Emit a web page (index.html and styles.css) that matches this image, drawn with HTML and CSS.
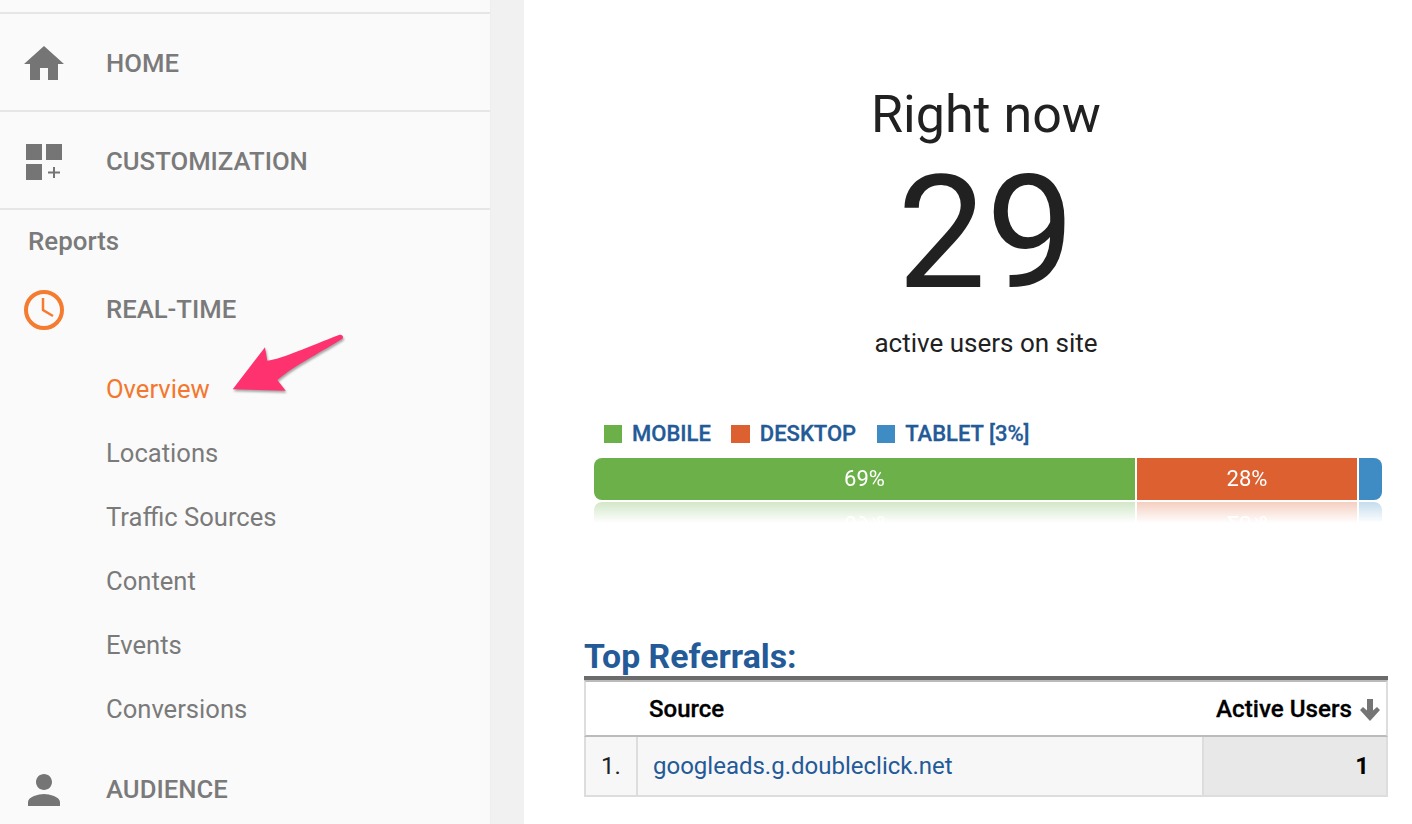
FILE: index.html
```html
<!DOCTYPE html>
<html lang="en">
<head>
  <meta charset="UTF-8">
  <title>Real-Time Overview</title>
  <link rel="stylesheet" href="styles.css">
</head>
<body>
  <!-- Sidebar -->
  <div class="sidebar">
    <div class="nav-row nav-row-ruled">
      <svg class="nav-icon" viewBox="0 0 24 24"><path d="M10 20v-6h4v6h5v-8h3L12 3 2 12h3v8z"/></svg>
      <span class="nav-label">HOME</span>
    </div>
    <div class="nav-row nav-row-ruled">
      <svg class="nav-icon" viewBox="0 0 48 48"><path d="M6 6h16v16H6zM26 6h16v16H26zM6 26h16v16H6z"/><path d="M34 29v11M28 34.500h12" class="plus"/></svg>
      <span class="nav-label">CUSTOMIZATION</span>
    </div>
    <div class="section-title">Reports</div>
    <div class="nav-row nav-row-open">
      <svg class="nav-icon clock" viewBox="0 0 48 48"><circle cx="24" cy="24" r="18"/><path class="clock-hands" d="M23 12v12l10 6"/></svg>
      <span class="nav-label">REAL-TIME</span>
    </div>
    <ul class="sub-list">
      <li class="active">Overview</li>
      <li>Locations</li>
      <li>Traffic Sources</li>
      <li>Content</li>
      <li>Events</li>
      <li>Conversions</li>
    </ul>
    <div class="nav-row nav-row-last">
      <svg class="nav-icon" viewBox="0 0 24 24"><path d="M12 12c2.210 0 4-1.790 4-4s-1.790-4-4-4-4 1.790-4 4 1.790 4 4 4zm0 2c-2.670 0-8 1.340-8 4v2h16v-2c0-2.660-5.330-4-8-4z"/></svg>
      <span class="nav-label">AUDIENCE</span>
    </div>
  </div>

  <div class="gutter"></div>

  <!-- Main report -->
  <div class="main">
    <div class="now-title">Right now</div>
    <div class="now-count">29</div>
    <div class="now-caption">active users on site</div>

    <div class="device-block">
      <div class="legend">
        <span class="legend-item"><i class="swatch mobile"></i>MOBILE</span>
        <span class="legend-item"><i class="swatch swatch-wide desktop"></i>DESKTOP</span>
        <span class="legend-item legend-last"><i class="swatch tablet"></i>TABLET [3%]</span>
      </div>
      <div class="bar">
        <div class="bar-part mobile part-mobile">69%</div>
        <div class="bar-part desktop part-desktop">28%</div>
        <div class="bar-part tablet part-tablet"></div>
      </div>
    </div>

    <h2 class="table-title">Top Referrals:</h2>
    <table class="ref-table">
      <thead>
        <tr>
          <th class="col-rank"></th>
          <th class="col-source">Source</th>
          <th class="col-users">Active Users <svg class="sort-arrow" viewBox="0 0 20 22"><path d="M7 0h6v11.500l4-3.500 3 3-10 11L0 11l3-3 4 3.500z"/></svg></th>
        </tr>
      </thead>
      <tbody>
        <tr>
          <td class="col-rank">1.</td>
          <td class="col-source"><a href="#">googleads.g.doubleclick.net</a></td>
          <td class="col-users">1</td>
        </tr>
      </tbody>
    </table>
  </div>

  <!-- Annotation arrow -->
  <svg class="arrow" viewBox="0 0 130 70"><path d="M12.700 59.300 45 17.300 47.300 30.700C62 29 90 16 119 5 122 4 124.500 7 122 9 105 20 75 35 57.300 50L65.700 60.700z"/></svg>
</body>
</html>
```

FILE: styles.css
```css
html, body {
  margin: 0;
  height: 824px;
  overflow: hidden;
}
body {
  display: flex;
  position: relative;
  font-family: 'Roboto', 'Arial', sans-serif;
  background: #ffffff;
  color: #212121;
}
.sidebar {
  width: 490px;
  padding-top: 12px;
  box-sizing: border-box;
  background: #fafafa;
  flex-shrink: 0;
}
.gutter {
  width: 33px;
  flex-shrink: 0;
  background: #f1f1f1;
  border-left: 1px solid #eeeeee;
}
.nav-row {
  display: flex;
  align-items: center;
  padding-left: 20px;
  height: 96px;
  color: #757575;
}
.nav-row-ruled {
  height: 94px;
  padding-top: 2px;
  border-top: 2px solid #e6e6e6;
}
.nav-row-ruled + .section-title {
  border-top: 2px solid #e6e6e6;
}
.nav-row-open {
  height: 64px;
  margin-top: 3px;
}
.nav-row-last {
  height: 64px;
  margin-top: 16px;
}
.nav-icon {
  width: 48px;
  height: 48px;
  margin-top: 2px;
  margin-right: 38px;
  fill: #757575;
  flex-shrink: 0;
}
.plus {
  fill: none;
  stroke: #757575;
  stroke-width: 2;
}
.clock {
  fill: none;
  stroke: #f47b2f;
  stroke-width: 4;
}
.clock-hands {
  stroke-width: 2.500;
}
.nav-label {
  font-size: 25.7px;
  font-weight: 500;
  color: #7a7a7a;
}
.section-title {
  padding: 16px 0 0 28px;
  height: 48px;
  font-size: 25.9px;
  font-weight: 500;
  color: #7a7a7a;
}
.sub-list {
  list-style-type: none;
  margin: 16px 0 0 0;
  padding: 0 0 0 106px;
  font-size: 25.6px;
  color: #7a7a7a;
}
.sub-list li {
  height: 64px;
  line-height: 64px;
}
.sub-list .active {
  color: #f4772e;
}
.main {
  flex: 1;
  display: flex;
  flex-direction: column;
  padding: 0 24px 0 60px;
  min-width: 0;
}
.now-title {
  margin-top: 85px;
  text-align: center;
  font-size: 52px;
  line-height: 60px;
}
.now-count {
  height: 174px;
  margin-top: 1px;
  text-align: center;
  font-size: 158px;
  line-height: 174px;
}
.now-caption {
  margin-top: 8px;
  text-align: center;
  font-size: 26px;
  line-height: 30px;
}
.device-block {
  margin-top: 63px;
  padding: 0 6px 0 10px;
}
.legend {
  display: flex;
  gap: 20px;
  padding-left: 10px;
  color: #235a97;
  font-size: 22px;
  font-weight: 500;
  line-height: 26px;
  -webkit-text-stroke: 0.3px #235a97;
}
.legend-item {
  display: flex;
  align-items: center;
}
.legend-last {
  margin-left: 1px;
}
.swatch {
  width: 18px;
  height: 18px;
  margin-right: 10px;
}
.swatch-wide {
  width: 19px;
}
.mobile { background: #6cb049; }
.desktop { background: #dd6031; }
.tablet { background: #3f8bc4; }
.bar {
  display: flex;
  gap: 2px;
  height: 42px;
  margin-top: 11px;
  border-radius: 8px;
  overflow: hidden;
  color: #ffffff;
  font-size: 22px;
  line-height: 42px;
  text-align: center;
  -webkit-box-reflect: below 2px linear-gradient(transparent 50%, rgba(255, 255, 255, 0.3));
}
.part-mobile { width: 541px; }
.part-desktop { width: 220px; }
.part-tablet { flex: 1; }
.table-title {
  margin: 137px 0 0 0;
  color: #235a97;
  font-size: 33.8px;
  font-weight: 700;
  line-height: 39px;
}
.ref-table {
  width: 804px;
  table-layout: fixed;
  border-collapse: separate;
  border-spacing: 0;
  border-top: 4px solid #6b6b6b;
  font-size: 24px;
}
.ref-table th {
  height: 53px;
  padding: 0;
  background: #ffffff;
  border-top: 2px solid #bbbbbb;
  border-bottom: 2px solid #bbbbbb;
  color: #000000;
  font-weight: 500;
  text-align: left;
  -webkit-text-stroke: 0.3px #000000;
}
.ref-table td {
  height: 58px;
  padding: 0;
  background: #f7f7f7;
  border-bottom: 2px solid #dddddd;
  color: #212121;
}
.ref-table .col-rank {
  width: 54px;
  border-left: 2px solid #dddddd;
  box-sizing: border-box;
}
.ref-table td.col-rank {
  padding-left: 15px;
  border-right: 2px solid #dddddd;
}
.ref-table th.col-source {
  padding-left: 11px;
}
.ref-table td.col-source {
  padding-left: 15px;
}
.ref-table .col-users {
  width: 186px;
  box-sizing: border-box;
  border-right: 2px solid #dddddd;
  text-align: right;
}
.ref-table th.col-users {
  white-space: nowrap;
  padding-right: 6px;
  font-size: 24.2px;
}
.ref-table td.col-users {
  background: #e8e8e8;
  border-left: 2px solid #dddddd;
  padding-right: 17px;
  font-weight: 700;
  color: #000000;
}
.ref-table a {
  color: #235a97;
  text-decoration: none;
}
.sort-arrow {
  width: 20px;
  height: 22px;
  margin-left: 2px;
  fill: #757575;
  vertical-align: -4px;
  stroke: none;
}
.arrow {
  position: absolute;
  left: 220px;
  top: 330px;
  width: 130px;
  height: 70px;
  fill: #ff3270;
  filter: drop-shadow(1px 2px 1px rgba(60, 60, 60, 0.45));
}
```
